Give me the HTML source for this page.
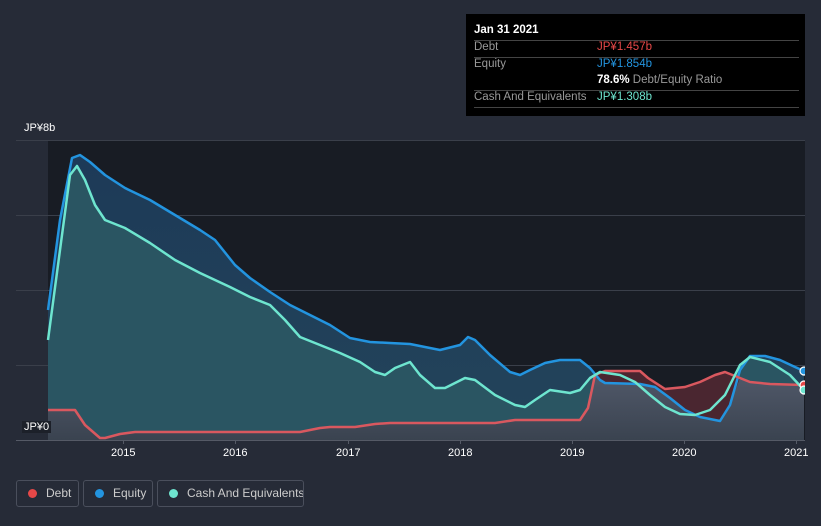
<!DOCTYPE html>
<html><head><meta charset="utf-8"><style>
body{margin:0;width:821px;height:526px;background:#262b37;font-family:"Liberation Sans",sans-serif;overflow:hidden;position:relative}
.ax{position:absolute;color:#fff;font-size:11px}
.tt{position:absolute;left:466px;top:14px;width:339px;height:102px;background:#000}
.tt div{position:absolute;font-size:11.5px;white-space:nowrap}
.ln{position:absolute;left:8px;width:325px;height:1px;background:#444}
.lg{position:absolute;top:480px;height:27px;border:1px solid #4a4f5c;border-radius:3px;box-sizing:border-box;color:#ccc;font-size:12px;line-height:25px;white-space:nowrap;overflow:hidden}
.lg i{display:inline-block;width:9px;height:9px;border-radius:50%;margin:0 9px 0 11px;vertical-align:-1px}
</style></head><body>
<svg width="821" height="526" style="position:absolute;left:0;top:0">
<defs>
<linearGradient id="eg" x1="0" y1="0" x2="0" y2="1"><stop offset="0" stop-color="#1d3a58"/><stop offset="1" stop-color="#23445a"/></linearGradient>
<linearGradient id="dg" x1="0" y1="0" x2="0" y2="1"><stop offset="0" stop-color="#55596a"/><stop offset="1" stop-color="#3c414e"/></linearGradient>
</defs>
<rect x="48" y="140" width="757" height="300" fill="#181c24"/>
<g stroke="#3a3f4a" stroke-width="1"><line x1="16" y1="140.5" x2="805" y2="140.5"/><line x1="16" y1="215.5" x2="805" y2="215.5"/><line x1="16" y1="290.5" x2="805" y2="290.5"/><line x1="16" y1="365.5" x2="805" y2="365.5"/></g>
<path fill="url(#eg)" d="M48,310 60,220 72,158 80,155 90,162 105,175 125,188 150,200 175,215 200,230 215,240 235,265 250,278 270,292 290,305 310,315 330,325 350,338 370,342 390,343 410,344 440,350 460,345 468,337 475,340 490,355 510,372 520,375 530,370 545,363 560,360 580,360 590,368 600,380 605,383 640,384 655,387 670,398 685,410 700,417 720,421 730,405 740,370 750,356 765,356 780,360 795,367 804,371 L804,440 48,440Z"/>
<path fill="#2a5562" d="M48,340 60,250 70,175 77,166 85,180 95,205 105,220 125,228 150,243 175,260 200,273 230,287 250,297 270,305 285,320 300,337 320,345 340,353 360,362 375,372 385,375 395,368 410,362 420,375 435,388 445,388 465,378 475,380 495,395 515,405 525,407 535,400 550,390 570,393 580,390 590,378 600,372 620,375 635,382 650,395 665,407 680,414 695,415 710,410 725,395 740,365 750,357 770,362 790,375 804,390 L804,440 48,440Z"/>
<path fill="#4a2630" d="M595,375 605,371 640,371 648,378 665,389 685,387 700,382 715,375 725,372 740,378 730,405 720,421 700,417 685,410 670,398 655,387 640,384 605,383Z"/>
<path fill="url(#dg)" opacity="0.9" d="M48,410 75,410 85,425 100,438 105,438 120,434 135,432 300,432 320,428 330,427 355,427 375,424 390,423 495,423 515,420 580,420 588,408 595,375 605,383 640,384 655,387 670,398 685,410 700,417 720,421 730,405 740,378 750,382 770,384 804,385 L804,440 48,440Z"/>
<g fill="none" stroke-width="2.5" stroke-linejoin="round">
<polyline stroke="#2394df" points="48,310 60,220 72,158 80,155 90,162 105,175 125,188 150,200 175,215 200,230 215,240 235,265 250,278 270,292 290,305 310,315 330,325 350,338 370,342 390,343 410,344 440,350 460,345 468,337 475,340 490,355 510,372 520,375 530,370 545,363 560,360 580,360 590,368 600,380 605,383 640,384 655,387 670,398 685,410 700,417 720,421 730,405 740,370 750,356 765,356 780,360 795,367 804,371"/>
<polyline stroke="#d9585f" points="48,410 75,410 85,425 100,438 105,438 120,434 135,432 300,432 320,428 330,427 355,427 375,424 390,423 495,423 515,420 580,420 588,408 595,375 605,371 640,371 648,378 665,389 685,387 700,382 715,375 725,372 740,378 750,382 770,384 804,385"/>
<polyline stroke="#6ee5cf" points="48,340 60,250 70,175 77,166 85,180 95,205 105,220 125,228 150,243 175,260 200,273 230,287 250,297 270,305 285,320 300,337 320,345 340,353 360,362 375,372 385,375 395,368 410,362 420,375 435,388 445,388 465,378 475,380 495,395 515,405 525,407 535,400 550,390 570,393 580,390 590,378 600,372 620,375 635,382 650,395 665,407 680,414 695,415 710,410 725,395 740,365 750,357 770,362 790,375 804,390"/>
</g>
<line x1="16" y1="440.5" x2="805" y2="440.5" stroke="#555a66"/>
<g stroke="#555a66"><line x1="123.5" y1="440" x2="123.5" y2="444"/><line x1="235.5" y1="440" x2="235.5" y2="444"/><line x1="348.5" y1="440" x2="348.5" y2="444"/><line x1="460.5" y1="440" x2="460.5" y2="444"/><line x1="572.5" y1="440" x2="572.5" y2="444"/><line x1="684.5" y1="440" x2="684.5" y2="444"/><line x1="796.5" y1="440" x2="796.5" y2="444"/></g>
<g stroke="#fff" stroke-width="1.2"><circle cx="804" cy="371" r="4" fill="#2394df"/><circle cx="804" cy="385" r="4" fill="#e64848"/><circle cx="804" cy="390" r="4" fill="#6ee5cf"/></g>
<rect x="805" y="130" width="16" height="320" fill="#262b37"/>
</svg>
<div class="ax" style="left:24px;top:122px">JP¥8b</div>
<div class="ax" style="left:22px;top:421px;background:#1c2029;padding:0 2px">JP¥0</div>
<div class="ax" style="left:111px;top:447px">2015</div>
<div class="ax" style="left:223px;top:447px">2016</div>
<div class="ax" style="left:336px;top:447px">2017</div>
<div class="ax" style="left:448px;top:447px">2018</div>
<div class="ax" style="left:560px;top:447px">2019</div>
<div class="ax" style="left:672px;top:447px">2020</div>
<div class="ax" style="left:784px;top:447px">2021</div>
<div class="tt">
<div style="left:8px;top:10px;color:#fff;font-weight:bold">Jan 31 2021</div>
<div class="ln" style="top:26px"></div>
<div style="left:8px;top:27px;color:#999">Debt</div><div style="left:131px;top:27px;color:#e64848">JP¥1.457b</div>
<div class="ln" style="top:43px"></div>
<div style="left:8px;top:44px;color:#999">Equity</div><div style="left:131px;top:44px;color:#2394df">JP¥1.854b</div>
<div style="left:131px;top:60px;color:#999"><b style="color:#fff">78.6%</b> Debt/Equity Ratio</div>
<div class="ln" style="top:76px"></div>
<div style="left:8px;top:77px;color:#999">Cash And Equivalents</div><div style="left:131px;top:77px;color:#6ee5cf">JP¥1.308b</div>
<div class="ln" style="top:93px"></div>
</div>
<div class="lg" style="left:16px;width:63px"><i style="background:#e64848"></i>Debt</div>
<div class="lg" style="left:83px;width:70px"><i style="background:#2394df"></i>Equity</div>
<div class="lg" style="left:157px;width:147px"><i style="background:#6ee5cf"></i>Cash And Equivalents</div>
</body></html>
